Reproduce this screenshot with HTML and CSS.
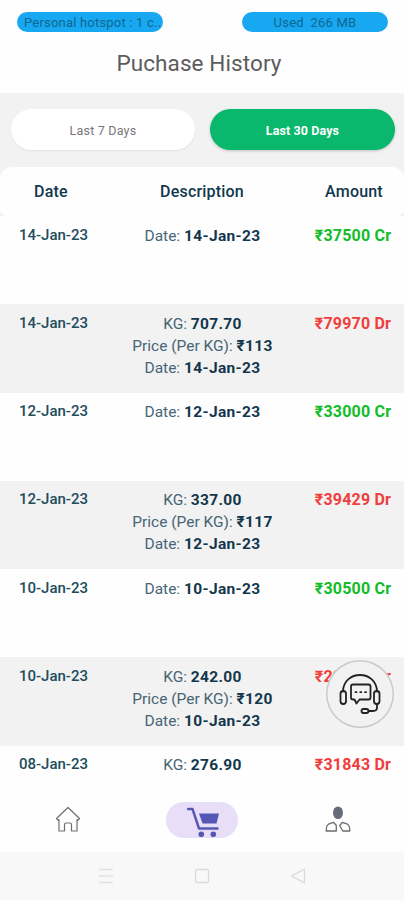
FILE: index.html
```html
<!DOCTYPE html>
<html lang="en">
<head>
<meta charset="utf-8">
<meta name="viewport" content="width=device-width, initial-scale=1">
<title>Puchase History</title>
<link rel="stylesheet" href="styles.css">
</head>
<body>
<div class="phone">
  <header class="status">
    <span class="pill pill-left">Personal hotspot : 1 c..</span>
    <span class="pill">Used&nbsp; 266 MB</span>
  </header>
  <h1 class="title">Puchase History</h1>
  <main class="content">
    <div class="tabs">
      <button class="tab">Last 7 Days</button>
      <button class="tab active">Last 30 Days</button>
    </div>
    <div class="thead row"><span>Date</span><span>Description</span><span class="head-amount">Amount</span></div>
    <section class="list">
      <div class="row entry"><span class="date">14-Jan-23</span><div class="desc"><p>Date: <b>14-Jan-23</b></p></div><b class="amount cr">₹37500 Cr</b></div>
      <div class="row entry"><span class="date">14-Jan-23</span><div class="desc"><p>KG: <b>707.70</b></p><p>Price (Per KG): <b>₹113</b></p><p>Date: <b>14-Jan-23</b></p></div><b class="amount">₹79970 Dr</b></div>
      <div class="row entry"><span class="date">12-Jan-23</span><div class="desc"><p>Date: <b>12-Jan-23</b></p></div><b class="amount cr">₹33000 Cr</b></div>
      <div class="row entry"><span class="date">12-Jan-23</span><div class="desc"><p>KG: <b>337.00</b></p><p>Price (Per KG): <b>₹117</b></p><p>Date: <b>12-Jan-23</b></p></div><b class="amount">₹39429 Dr</b></div>
      <div class="row entry"><span class="date">10-Jan-23</span><div class="desc"><p>Date: <b>10-Jan-23</b></p></div><b class="amount cr">₹30500 Cr</b></div>
      <div class="row entry"><span class="date">10-Jan-23</span><div class="desc"><p>KG: <b>242.00</b></p><p>Price (Per KG): <b>₹120</b></p><p>Date: <b>10-Jan-23</b></p></div><b class="amount">₹29040 Dr</b></div>
      <div class="row entry"><span class="date">08-Jan-23</span><div class="desc"><p>KG: <b>276.90</b></p></div><b class="amount">₹31843 Dr</b></div>
    </section>
  </main>
  <button class="support" aria-label="Support">
    <svg viewBox="0 0 68 68" width="68" height="68" fill="none" stroke="#222" stroke-width="1.8" stroke-linejoin="round" stroke-linecap="round">
      <path d="M17 31.500C17.500 9.500 50.500 9.500 51 31.500"/>
      <rect x="14.500" y="31" width="5.500" height="13" rx="2.700"/>
      <rect x="48" y="31" width="5.500" height="13" rx="2.700"/>
      <path d="M27 24.500H42.500Q44.500 24.500 44.500 26.500V37.500Q44.500 39.500 42.500 39.500H33.500L30.500 43.500L28.500 39.500H27Q25 39.500 25 37.500V26.500Q25 24.500 27 24.500Z"/>
      <path d="M29.500 32.200h1M34.300 32.200h1M39.100 32.200h1" stroke-width="1.800"/>
      <path d="M51 44V47.500Q51 51 47 51H42.500"/>
      <rect x="35.500" y="49" width="7" height="4" rx="2"/>
    </svg>
  </button>
  <nav class="tabbar">
    <svg class="home" viewBox="0 0 26 26" width="26" height="26" fill="none" stroke="#6f6f6f" stroke-width="1.200" stroke-linejoin="round"><path d="M13 1.500L24.500 12.500L23 14.200L22 13.500V25H16.500V18.500Q16.500 17 15 17H11Q9.500 17 9.500 18.500V25H4V13.500L3 14.200L1.500 12.500Z"/></svg>
    <div class="cart"><svg viewBox="0 0 32 30" width="32" height="30"><path d="M1 2H5.500L12 21.500H30.500" fill="none" stroke="#5557b4" stroke-width="2.400" stroke-linecap="round" stroke-linejoin="round"/><path d="M12 6.500H32L29.500 16.500H15.500Z" fill="#5557b4"/><circle cx="14.300" cy="27.200" r="2.800" fill="#5557b4"/><circle cx="26.300" cy="27.200" r="2.800" fill="#5557b4"/></svg></div>
    <svg class="user" viewBox="0 0 26 26" width="26" height="26"><ellipse cx="13" cy="6.800" rx="5" ry="6.300" fill="#686b78"/><path d="M8.500 16.300L3.500 18.200Q1.200 19.500 1.200 25H11.300V19.500ZM17.500 16.300L22.500 18.200Q24.800 19.500 24.800 25H17.800L14.700 19.500Z" fill="none" stroke="#6b6b70" stroke-width="1.300" stroke-linejoin="round"/></svg>
  </nav>
  <footer class="system">
    <svg viewBox="0 0 16 16" width="16" height="16" fill="none" stroke="#e2e2e2" stroke-width="1.500"><path d="M1 1.500H15M1 8H15M1 14.500H15"/></svg>
    <svg viewBox="0 0 16 16" width="16" height="16" fill="none" stroke="#dadada" stroke-width="1.300"><rect x="1.500" y="1.500" width="13" height="13" rx="2"/></svg>
    <svg viewBox="0 0 16 16" width="16" height="16" fill="none" stroke="#dadada" stroke-width="1.300" stroke-linejoin="round"><path d="M1.500 8L14.500 1.200V14.800Z"/></svg>
  </footer>
</div>
</body>
</html>
```
FILE: styles.css
```css
* { box-sizing: border-box; }
body { margin: 0; font-family: Roboto, "Noto Sans", sans-serif; background: #fefefe; color: #234c5c; }
button { border: 0; padding: 0; font: inherit; }
p { margin: 0; }
.phone { position: relative; width: 404px; height: 900px; overflow: hidden; display: flex; flex-direction: column; }
.status { height: 44px; flex: none; padding: 12px 16px 0 17px; display: flex; justify-content: space-between; align-items: flex-start; }
.pill { width: 146px; height: 20px; border-radius: 10px; background: #18a8f1; color: #0c6792; font-size: 13px; line-height: 21px; text-align: center; white-space: nowrap; letter-spacing: .2px; }
.pill-left { text-align: left; padding-left: 7px; }
.title { height: 49px; flex: none; margin: 0; font-weight: 400; font-size: 22.500px; line-height: 39px; text-align: center; color: #5c5c5c; letter-spacing: .1px; padding-right: 6px; }
.content { flex: 1; min-height: 0; overflow: hidden; background: #f2f2f2; display: flex; flex-direction: column; }
.tabs { flex: none; height: 74px; padding: 16px 9px 0 11px; display: grid; grid-template-columns: 1fr 1fr; gap: 16px; align-items: start; }
.tab { height: 41px; border-radius: 21px; background: #fff; color: #777; font-size: 12.500px; line-height: 43px; letter-spacing: .2px; box-shadow: 0 1px 2px #0001; }
.tab.active { margin-left: -1px; background: #09b86c; color: #fff; font-weight: 700; letter-spacing: .1px; box-shadow: 0 1px 3px #0003; }
.row { display: grid; grid-template-columns: 102px 1fr 102px; text-align: center; }
.thead { flex: none; height: 49px; background: #fefefe; border-radius: 12px 12px 7px 7px; font-size: 16px; font-weight: 500; line-height: 50px; color: #11374e; letter-spacing: .2px; }
.head-amount { padding-left: 2px; }
.list { flex: none; }
.entry { height: 88.300px; padding-top: 8.500px; font-size: 15.500px; line-height: 22px; background: #fefefe; }
.entry:nth-child(even) { background: #f2f2f2; }
.date { font-size: 15px; font-weight: 500; padding-left: 5px; line-height: 21px; }
.desc { color: #486575; padding-left: 1px; }
.desc b { color: #12374c; letter-spacing: .35px; }
.amount { color: #f03e3c; font-size: 16px; letter-spacing: .2px; }
.amount.cr { color: #10bd28; }
.support { position: absolute; left: 326px; top: 660px; width: 68px; height: 68px; border-radius: 50%; background: #f2f2f2; box-shadow: inset 0 0 0 1.500px #c9c9c9; }
.support svg { display: block; }
.tabbar { flex: none; height: 67px; background: #fefefe; display: grid; grid-template-columns: 1fr 1fr 1fr; justify-items: center; padding-top: 17px; }
.cart { width: 72px; height: 36px; border-radius: 18px; background: #e8def7; display: flex; justify-content: center; padding: 5px 0 0 2px; margin-left: 1px; }
.home { margin: 4px 0 0 2px; }
.user { margin: 4px 0 0 2px; }
.system { flex: none; height: 48px; background: #f8f8f8; display: flex; justify-content: center; gap: 80px; padding-top: 16px; }
```
